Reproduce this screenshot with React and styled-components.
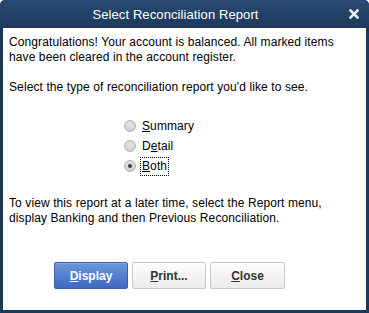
import React from "react";
import styled, { createGlobalStyle } from "styled-components";

const Global = createGlobalStyle`
  html, body { margin: 0; padding: 0; background: #fff; }
  body { font-family: "Liberation Sans", Arial, sans-serif; }
`;

const Window = styled.div`
  width: 369px;
  height: 313px;
  display: flex;
  flex-direction: column;
  background: #1d3759;
  border-radius: 5px 5px 0 0;
  overflow: hidden;
  box-sizing: border-box;
`;

const TitleBar = styled.div`
  height: 28px;
  flex: none;
  display: flex;
  align-items: center;
  position: relative;
  background: linear-gradient(#284a72, #1e395c);
  color: #fff;
`;

const Title = styled.div`
  flex: 1;
  text-align: center;
  font-size: 13px;
  padding-right: 18px;
  letter-spacing: 0.1px;
`;

const CloseX = styled.div`
  position: absolute;
  right: 10px;
  top: 9px;
  width: 10px;
  height: 10px;
  display: flex;
  align-items: center;
  justify-content: center;
`;

const Body = styled.div`
  flex: 1;
  margin: 0 3px 3px 3px;
  background: #fff;
  padding: 7px 6px 0 6px;
  color: #000;
  font-size: 12px;
  line-height: 15px;
  letter-spacing: 0.1px;
  display: flex;
  flex-direction: column;
`;

const Para = styled.p`
  margin: 0 0 ${(p) => p.$after || 0}px 0;
`;

const RadioGroup = styled.div`
  display: flex;
  flex-direction: column;
  padding-left: 115px;
  margin-bottom: ${(p) => p.$after}px;
`;

const RadioRow = styled.label`
  height: 20px;
  display: flex;
  align-items: center;
  gap: 4px;
`;

const RadioCircle = styled.span`
  width: 12px;
  height: 12px;
  border-radius: 50%;
  box-sizing: border-box;
  border: 1px solid #b4b4b4;
  background: radial-gradient(circle at 50% 40%, #e6e6e6, #c6c6c6);
  display: flex;
  align-items: center;
  justify-content: center;
  &::after {
    content: "";
    width: 4px;
    height: 4px;
    border-radius: 50%;
    background: ${(p) => (p.$checked ? "#3c3c3c" : "transparent")};
  }
`;

const RadioLabel = styled.span`
  padding: 1px 1px;
  border: 1px dotted ${(p) => (p.$focus ? "#000" : "transparent")};
  line-height: 15px;
`;

const U = styled.span`
  text-decoration: underline;
`;

const ButtonRow = styled.div`
  display: flex;
  gap: 4px;
  padding-left: 45px;
  margin-top: 36px;
`;

const Button = styled.button`
  width: ${(p) => p.$w || 74}px;
  height: 27px;
  box-sizing: border-box;
  border-radius: 2px;
  font-family: "Liberation Sans", Arial, sans-serif;
  font-size: 12px;
  font-weight: bold;
  padding: 0;
  cursor: default;
  border: 1px solid ${(p) => (p.$primary ? "#3d5fa6" : "#cacaca")};
  color: ${(p) => (p.$primary ? "#fff" : "#333")};
  background: ${(p) =>
    p.$primary
      ? "linear-gradient(#6b98dc, #3e67c2)"
      : "linear-gradient(#fdfdfd, #ebebeb)"};
  box-shadow: inset 0 1px 0 ${(p) => (p.$primary ? "#86aae4" : "#fff")};
`;

export default function App() {
  return (
    <>
      <Global />
      <Window>
        <TitleBar>
          <Title>Select Reconciliation Report</Title>
          <CloseX>
            <svg width="10" height="10" viewBox="0 0 10 10">
              <path d="M1.5 1.5 L8.5 8.5 M8.5 1.5 L1.5 8.5" stroke="#e8ecf2" strokeWidth="2.6" strokeLinecap="square" />
            </svg>
          </CloseX>
        </TitleBar>
        <Body>
          <Para $after={15}>
            Congratulations! Your account is balanced. All marked items
            <br />
            have been cleared in the account register.
          </Para>
          <Para $after={21}>Select the type of reconciliation report you'd like to see.</Para>
          <RadioGroup $after={20}>
            <RadioRow>
              <RadioCircle />
              <RadioLabel>
                <U>S</U>ummary
              </RadioLabel>
            </RadioRow>
            <RadioRow>
              <RadioCircle />
              <RadioLabel>
                D<U>e</U>tail
              </RadioLabel>
            </RadioRow>
            <RadioRow>
              <RadioCircle $checked />
              <RadioLabel $focus>
                <U>B</U>oth
              </RadioLabel>
            </RadioRow>
          </RadioGroup>
          <Para>
            To view this report at a later time, select the Report menu,
            <br />
            display Banking and then Previous Reconciliation.
          </Para>
          <ButtonRow>
            <Button $primary>
              <U>D</U>isplay
            </Button>
            <Button>
              <U>P</U>rint...
            </Button>
            <Button $w={75}>
              <U>C</U>lose
            </Button>
          </ButtonRow>
        </Body>
      </Window>
    </>
  );
}
